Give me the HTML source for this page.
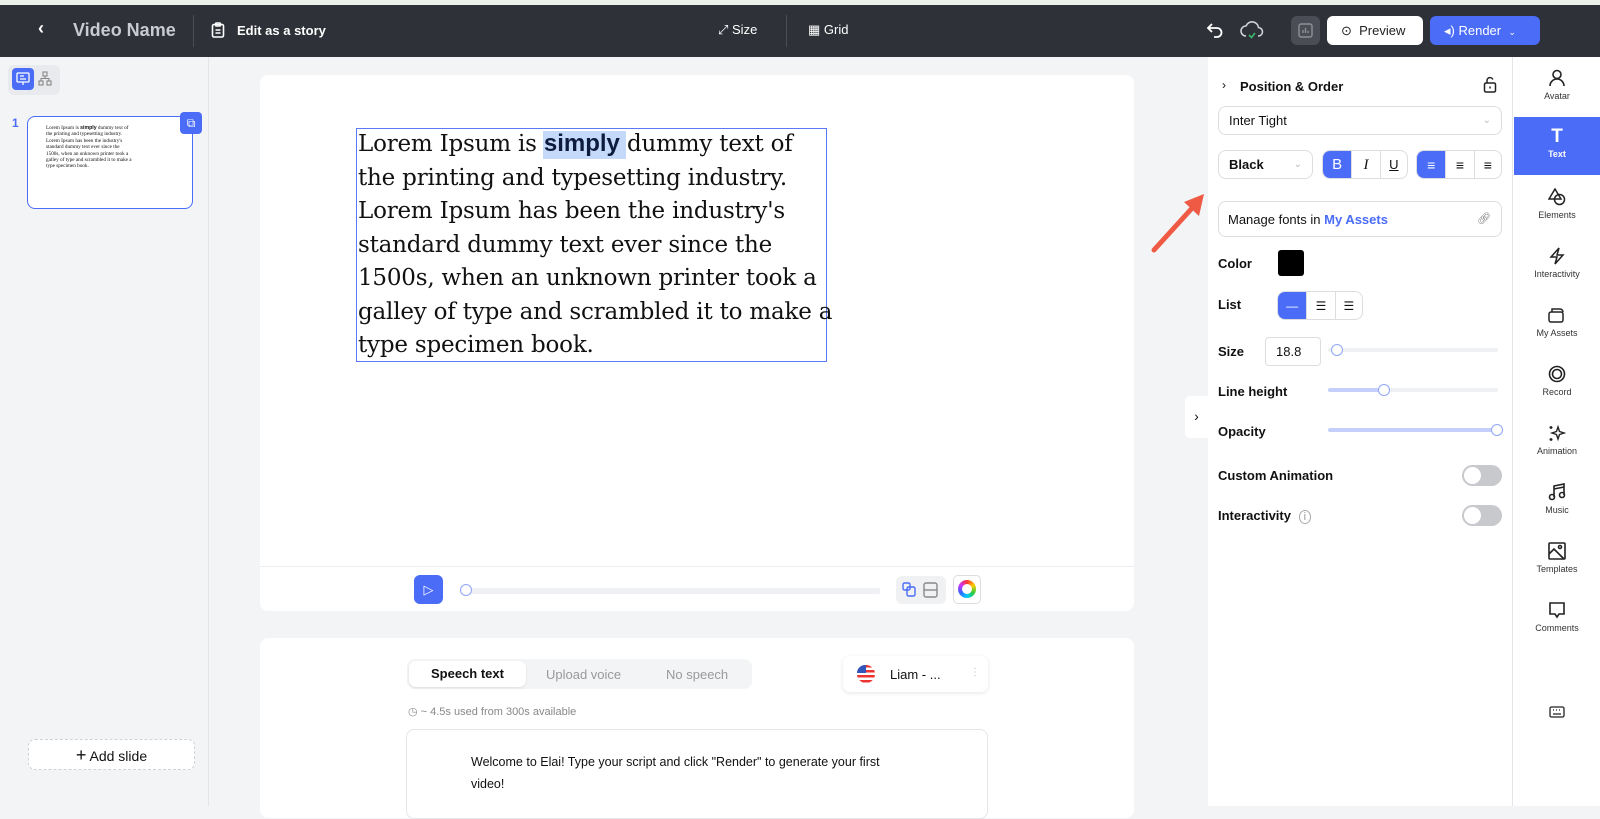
<!DOCTYPE html>
<html><head><meta charset="utf-8"><style>
*{box-sizing:border-box;margin:0;padding:0}
body{width:1600px;height:806px;overflow:hidden;background:#f3f4f6;font-family:"Liberation Sans",sans-serif;position:relative;color:#111}
.a{position:absolute}
.top{left:0;top:0;width:1600px;height:5px;background:#eef0ea}
.bar{left:0;top:5px;width:1600px;height:52px;background:#2e3138;color:#fff}
.bar .t{position:absolute;font-weight:bold;font-size:13px}
.card{background:#fff;border-radius:8px}
.lbl{font-weight:bold;font-size:13px;position:absolute;left:1218px}
.box{border:1px solid #dcdde0;border-radius:8px;background:#fff;position:absolute}
.nav{position:absolute;left:1514px;width:86px;text-align:center;font-size:9px;color:#333}
.nav svg{display:block;margin:0 auto 4px}
.tog{position:absolute;left:1462px;width:40px;height:21px;border-radius:11px;background:#c8c9cc}
.tog:after{content:"";position:absolute;left:2px;top:2px;width:17px;height:17px;border-radius:50%;background:#fff}
.trk{position:absolute;height:4px;border-radius:2px;background:#eef0f3}
.knob{position:absolute;width:12px;height:12px;border-radius:50%;border:1.5px solid #8fa6f7;background:#fff}
</style></head><body>
<div class="a top"></div>
<div class="a bar">
 <div class="t" style="left:38px;top:13px;font-size:18px">‹</div>
 <div class="t" style="left:73px;top:15px;font-size:18px;color:#c9cbd0">Video Name</div>
 <div class="a" style="left:193px;top:10px;width:1px;height:32px;background:#4a4d55"></div>
 <svg class="a" style="left:211px;top:17px" width="14" height="16" viewBox="0 0 14 16" fill="none" stroke="#fff" stroke-width="1.6"><rect x="1.5" y="2.5" width="11" height="12.5" rx="1.5"/><rect x="4.5" y="1" width="5" height="3" rx="1"/><path d="M4.5 8h5M4.5 11h5"/></svg>
 <div class="t" style="left:237px;top:18px">Edit as a story</div>
 <div class="t" style="left:718px;top:17px;font-weight:normal;font-size:13px">⤢ Size</div>
 <div class="a" style="left:786px;top:10px;width:1px;height:32px;background:#4a4d55"></div>
 <div class="t" style="left:808px;top:17px;font-weight:normal;font-size:13px">▦ Grid</div>
 <svg class="a" style="left:1206px;top:17px" width="18" height="16" viewBox="0 0 18 16" fill="none" stroke="#fff" stroke-width="1.8"><path d="M6 2L2 6l4 4M2 6h9a4.5 4.5 0 010 9H8"/></svg>
 <svg class="a" style="left:1240px;top:15px" width="24" height="20" viewBox="0 0 24 20" fill="none" stroke="#cfd1d6" stroke-width="1.6"><path d="M6 16a5 5 0 010-10 6.5 6.5 0 0112.5 1.5A4 4 0 0118 16"/><path d="M9 15l2.5 2.5L15 13" stroke="#3cb46e"/></svg>
 <div class="a" style="left:1291px;top:11px;width:29px;height:29px;border-radius:6px;background:#4a4d55"></div>
 <svg class="a" style="left:1298px;top:18px" width="15" height="15" viewBox="0 0 15 15" fill="none" stroke="#8d9097" stroke-width="1.4"><rect x="1" y="1" width="13" height="13" rx="2"/><path d="M5 10V7M7.5 10V5M10 10V8"/></svg>
 <div class="a" style="left:1327px;top:11px;width:96px;height:29px;border-radius:6px;background:#fff;color:#222;font-size:13px;line-height:29px;padding-left:14px">⊙&nbsp; Preview</div>
 <div class="a" style="left:1430px;top:11px;width:110px;height:29px;border-radius:6px;background:#4a6cf7;color:#fff;font-size:13px;line-height:29px;padding-left:14px">◂)&nbsp;Render&nbsp; <span style="font-size:9px">⌄</span></div>
</div>
<!-- left sidebar -->
<div class="a" style="left:208px;top:57px;width:1px;height:749px;background:#e4e5e8"></div>
<div class="a" style="left:8px;top:65px;width:52px;height:30px;border-radius:6px;background:#e9eaed"></div>
<div class="a" style="left:12px;top:68px;width:22px;height:22px;border-radius:4px;background:#4a6cf7"></div>
<svg class="a" style="left:16px;top:72px" width="14" height="14" viewBox="0 0 14 14" fill="none" stroke="#fff" stroke-width="1.3"><rect x="1" y="1" width="12" height="9" rx="1"/><path d="M4 4h4M4 7h6M7 10v3"/></svg>
<svg class="a" style="left:38px;top:71px" width="14" height="15" viewBox="0 0 14 15" fill="none" stroke="#888" stroke-width="1.1"><rect x="5" y="1" width="4" height="4"/><rect x="1" y="10" width="4" height="4"/><rect x="9" y="10" width="4" height="4"/><path d="M7 5v2.5M3 10V7.5h8V10"/></svg>
<div class="a" style="left:12px;top:116px;font-size:12px;font-weight:bold;color:#4a6cf7">1</div>
<div class="a" style="left:27px;top:116px;width:166px;height:93px;border:1.5px solid #4a6cf7;border-radius:8px;background:#fff"></div>
<div class="a" style="left:180px;top:112px;width:22px;height:22px;border-radius:4px;background:#4a6cf7;color:#fff;font-size:12px;text-align:center;line-height:22px">⧉</div>
<div class="a" style="left:46px;top:125px;width:95px;font-family:'Liberation Serif',serif;font-size:5.2px;line-height:6.4px;white-space:nowrap">Lorem Ipsum is <b style="font-family:'Liberation Sans'">simply</b> dummy text of<br>the printing and typesetting industry.<br>Lorem Ipsum has been the industry's<br>standard dummy text ever since the<br>1500s, when an unknown printer took a<br>galley of type and scrambled it to make a<br>type specimen book.</div>
<div class="a" style="left:28px;top:739px;width:167px;height:31px;border:1px dashed #d0d2d6;border-radius:7px;background:#fff;text-align:center;line-height:30px;font-size:14px"><span style="font-size:18px">+</span> Add slide</div>
<!-- canvas -->
<div class="a card" style="left:260px;top:75px;width:874px;height:536px"></div>
<div class="a" style="left:260px;top:566px;width:874px;height:1px;background:#eceef1"></div>
<div class="a" style="left:356px;top:128px;width:471px;height:234px;border:1px solid #5b78f5"></div>
<div class="a" style="left:543px;top:131px;width:83px;height:28px;background:#c5dafb"></div>
<div class="a" style="left:358px;top:127px;font-family:'DejaVu Serif','Liberation Serif',serif;font-size:23px;line-height:33.5px;letter-spacing:-0.2px;color:#111;white-space:nowrap">Lorem Ipsum is <b style="font-family:'Liberation Sans',sans-serif;font-size:24px;color:#0d1b3e;letter-spacing:0">simply</b> dummy text of<br>the printing and typesetting industry.<br>Lorem Ipsum has been the industry's<br>standard dummy text ever since the<br>1500s, when an unknown printer took a<br>galley of type and scrambled it to make a<br>type specimen book.</div>
<div class="a" style="left:414px;top:575px;width:29px;height:29px;border-radius:6px;background:#4a6cf7;color:#fff;text-align:center;line-height:29px;font-size:13px">▷</div>
<div class="trk" style="left:460px;top:588px;width:420px;height:6px"></div>
<div class="knob" style="left:460px;top:584px"></div>
<div class="a" style="left:896px;top:576px;width:50px;height:28px;border-radius:6px;background:#f0f1f3"></div>
<svg class="a" style="left:902px;top:582px" width="38" height="16" viewBox="0 0 38 16" fill="none" stroke-width="1.4"><rect x="1" y="1" width="7" height="7" rx="1.5" stroke="#4a6cf7"/><rect x="5" y="5" width="8" height="9" rx="1.5" stroke="#4a6cf7"/><rect x="22" y="1" width="13" height="14" rx="2" stroke="#888"/><path d="M22 8h13" stroke="#888"/></svg>
<div class="a" style="left:953px;top:575px;width:28px;height:29px;border:1px solid #ddd;border-radius:5px;background:#fff"></div>
<div class="a" style="left:958px;top:580px;width:18px;height:18px;border-radius:50%;background:conic-gradient(#f33,#fc0,#3c3,#0cf,#36f,#c3f,#f33)"></div>
<div class="a" style="left:962px;top:584px;width:10px;height:10px;border-radius:50%;background:#fff"></div>
<!-- speech -->
<div class="a card" style="left:260px;top:638px;width:874px;height:180px"></div>
<div class="a" style="left:407px;top:659px;width:345px;height:30px;border-radius:8px;background:#f3f4f6"></div>
<div class="a" style="left:409px;top:661px;width:117px;height:26px;border-radius:7px;background:#fff;box-shadow:0 1px 2px #ddd;font-size:13px;font-weight:bold;text-align:center;line-height:26px">Speech text</div>
<div class="a" style="left:546px;top:667px;font-size:13px;color:#999">Upload voice</div>
<div class="a" style="left:666px;top:667px;font-size:13px;color:#999">No speech</div>
<div class="a" style="left:843px;top:656px;width:145px;height:36px;border-radius:7px;background:#fff;box-shadow:0 1px 4px #e3e4e7"></div>
<div class="a" style="left:857px;top:665px;width:18px;height:18px;border-radius:50%;background:repeating-linear-gradient(#e33 0 2.5px,#fff 2.5px 5px)"></div>
<div class="a" style="left:857px;top:665px;width:9px;height:8px;border-radius:9px 0 0 0;background:#3355bb"></div>
<div class="a" style="left:890px;top:667px;font-size:13px">Liam - ...</div>
<div class="a" style="left:970px;top:667px;font-size:10px;color:#bbb">⋮</div>
<div class="a" style="left:408px;top:705px;font-size:11px;color:#888">◷ ~ 4.5s used from 300s available</div>
<div class="a" style="left:406px;top:729px;width:582px;height:90px;border:1px solid #e5e6e9;border-radius:8px"></div>
<div class="a" style="left:471px;top:751px;width:460px;font-size:12.5px;line-height:22px">Welcome to Elai! Type your script and click "Render" to generate your first<br>video!</div>
<!-- collapse tab -->
<div class="a" style="left:1185px;top:396px;width:23px;height:42px;background:#fff;border-radius:5px 0 0 5px;font-size:14px;text-align:center;line-height:40px">›</div>
<!-- right panel -->
<div class="a" style="left:1208px;top:57px;width:304px;height:749px;background:#fff"></div>
<div class="a" style="left:1222px;top:78px;font-size:12px">›</div>
<div class="a" style="left:1240px;top:79px;font-size:13px;font-weight:bold">Position &amp; Order</div>
<svg class="a" style="left:1483px;top:76px" width="14" height="17" viewBox="0 0 14 17" fill="none" stroke="#222" stroke-width="1.5"><rect x="1.5" y="7" width="11" height="9" rx="1.5"/><path d="M4 7V4.5a3 3 0 015.8-1"/><path d="M7 10.5v2"/></svg>
<div class="box" style="left:1218px;top:106px;width:284px;height:29px;font-size:13px;line-height:28px;padding-left:10px">Inter Tight<span style="position:absolute;right:10px;color:#bbb;font-size:10px">⌄</span></div>
<div class="box" style="left:1218px;top:150px;width:95px;height:29px;font-size:13px;font-weight:bold;line-height:28px;padding-left:10px">Black<span style="position:absolute;right:10px;color:#bbb;font-size:10px;font-weight:normal">⌄</span></div>
<div class="box" style="left:1322px;top:150px;width:86px;height:29px;overflow:hidden;display:flex;font-size:15px;line-height:28px;text-align:center">
 <div style="width:29px;background:#4a6cf7;color:#fff">B</div><div style="width:29px;border-left:1px solid #ddd;font-style:italic;font-family:'Liberation Serif'">I</div><div style="width:28px;border-left:1px solid #ddd;text-decoration:underline;font-size:13px">U</div></div>
<div class="box" style="left:1416px;top:150px;width:86px;height:29px;overflow:hidden;display:flex;font-size:14px;line-height:28px;text-align:center">
 <div style="width:29px;background:#4a6cf7;color:#fff">≡</div><div style="width:29px;border-left:1px solid #ddd">≡</div><div style="width:28px;border-left:1px solid #ddd">≡</div></div>
<svg class="a" style="left:1150px;top:190px" width="60" height="65" viewBox="0 0 60 65"><path d="M4 60L44 16" stroke="#ef5a45" stroke-width="5" stroke-linecap="round"/><path d="M54 4L34 12L49 26Z" fill="#ef5a45"/></svg>
<div class="box" style="left:1218px;top:201px;width:284px;height:36px;font-size:13px;line-height:35px;padding-left:9px">Manage fonts in <b style="color:#4a6cf7">My Assets</b><span style="position:absolute;right:10px;color:#777;font-size:11px">🔗︎</span></div>
<div class="lbl" style="top:256px">Color</div>
<div class="a" style="left:1278px;top:250px;width:26px;height:26px;border-radius:3px;background:#000"></div>
<div class="lbl" style="top:297px">List</div>
<div class="box" style="left:1277px;top:291px;width:86px;height:29px;overflow:hidden;display:flex;font-size:12px;line-height:28px;text-align:center">
 <div style="width:29px;background:#4a6cf7;color:#fff">—</div><div style="width:29px;border-left:1px solid #ddd">☰</div><div style="width:28px;border-left:1px solid #ddd">☰</div></div>
<div class="lbl" style="top:344px">Size</div>
<div class="box" style="left:1265px;top:337px;width:56px;height:29px;border-radius:4px;font-size:13px;line-height:28px;padding-left:10px">18.8</div>
<div class="trk" style="left:1328px;top:348px;width:170px"></div>
<div class="knob" style="left:1331px;top:344px"></div>
<div class="lbl" style="top:384px">Line height</div>
<div class="trk" style="left:1328px;top:388px;width:170px"></div>
<div class="trk" style="left:1328px;top:388px;width:56px;background:#c4d0fb"></div>
<div class="knob" style="left:1378px;top:384px"></div>
<div class="lbl" style="top:424px">Opacity</div>
<div class="trk" style="left:1328px;top:428px;width:170px;background:#c4d0fb"></div>
<div class="knob" style="left:1491px;top:424px"></div>
<div class="lbl" style="top:468px">Custom Animation</div>
<div class="tog" style="top:465px"></div>
<div class="lbl" style="top:508px">Interactivity <span style="font-weight:normal;color:#999;font-size:11px;border:1px solid #aaa;border-radius:50%;padding:0 4px;margin-left:4px">i</span></div>
<div class="tog" style="top:505px"></div>
<!-- right nav -->
<div class="a" style="left:1512px;top:57px;width:88px;height:749px;background:#fff;border-left:1px solid #e4e5e8"></div>
<div class="nav" style="top:69px"><svg width="16" height="18" viewBox="0 0 16 18" fill="none" stroke="#222" stroke-width="1.6"><circle cx="8" cy="5.5" r="4"/><path d="M1 17a7 7 0 0114 0"/></svg>Avatar</div>
<div class="a" style="left:1514px;top:117px;width:86px;height:58px;background:#4a6cf7"></div>
<div class="nav" style="top:127px;color:#fff;font-weight:bold"><div style="font-size:19px;line-height:20px;margin-bottom:2px">T</div>Text</div>
<div class="nav" style="top:188px"><svg width="18" height="18" viewBox="0 0 18 18" fill="none" stroke="#222" stroke-width="1.5"><path d="M7 1L1 11h12z"/><circle cx="11.5" cy="11.5" r="5"/></svg>Elements</div>
<div class="nav" style="top:247px"><svg width="16" height="18" viewBox="0 0 16 18" fill="none" stroke="#222" stroke-width="1.5"><path d="M10 1L2 10h6l-2 7 8-9H8z"/></svg>Interactivity</div>
<div class="nav" style="top:306px"><svg width="18" height="18" viewBox="0 0 18 18" fill="none" stroke="#222" stroke-width="1.5"><rect x="1" y="6" width="14" height="10" rx="2"/><path d="M4 6V3h8a3 3 0 013 3"/></svg>My Assets</div>
<div class="nav" style="top:365px"><svg width="18" height="18" viewBox="0 0 18 18" fill="none" stroke="#222" stroke-width="1.6"><circle cx="9" cy="9" r="7.5"/><circle cx="9" cy="9" r="4.5"/></svg>Record</div>
<div class="nav" style="top:424px"><svg width="18" height="18" viewBox="0 0 18 18" fill="none" stroke="#222" stroke-width="1.4"><path d="M10 3l1.5 4.5L16 9l-4.5 1.5L10 15l-1.5-4.5L4 9l4.5-1.5z"/><path d="M3 2v3M1.5 3.5h3M3 14v3M1.5 15.5h3"/></svg>Animation</div>
<div class="nav" style="top:483px"><svg width="18" height="18" viewBox="0 0 18 18" fill="none" stroke="#222" stroke-width="1.6"><path d="M6 14V3l10-2v11"/><circle cx="4" cy="14" r="2.5"/><circle cx="14" cy="12" r="2.5"/><path d="M6 6l10-2"/></svg>Music</div>
<div class="nav" style="top:542px"><svg width="18" height="18" viewBox="0 0 18 18" fill="none" stroke="#222" stroke-width="1.6"><rect x="1" y="1" width="16" height="16" rx="1"/><path d="M1 12l5-5 10 10"/><circle cx="12" cy="5" r="1.5"/></svg>Templates</div>
<div class="nav" style="top:601px"><svg width="18" height="18" viewBox="0 0 18 18" fill="none" stroke="#222" stroke-width="1.6"><path d="M2 2h14v11h-5l-2 3-2-3H2z"/></svg>Comments</div>
<div class="nav" style="top:706px"><svg width="16" height="12" viewBox="0 0 16 12" fill="none" stroke="#222" stroke-width="1.3"><rect x="1" y="1" width="14" height="10" rx="1.5"/><path d="M4 4h1M7 4h1M10 4h1M4 8h8"/></svg></div>
</body></html>
